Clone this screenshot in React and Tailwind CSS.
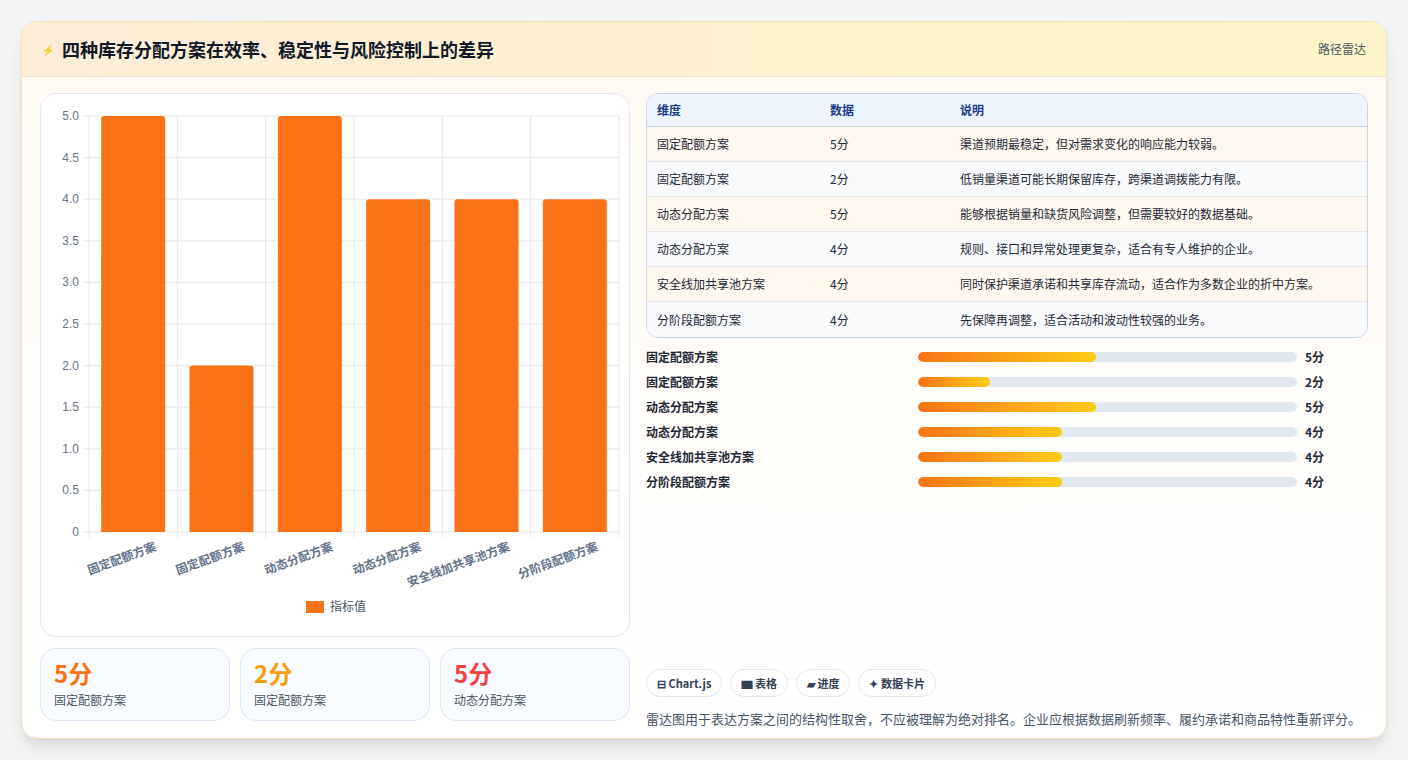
import React from "react";

const items = [
  ["固定配额方案", 5, "渠道预期最稳定，但对需求变化的响应能力较弱。"],
  ["固定配额方案", 2, "低销量渠道可能长期保留库存，跨渠道调拨能力有限。"],
  ["动态分配方案", 5, "能够根据销量和缺货风险调整，但需要较好的数据基础。"],
  ["动态分配方案", 4, "规则、接口和异常处理更复杂，适合有专人维护的企业。"],
  ["安全线加共享池方案", 4, "同时保护渠道承诺和共享库存流动，适合作为多数企业的折中方案。"],
  ["分阶段配额方案", 4, "先保障再调整，适合活动和波动性较强的业务。"],
];

function Chart() {
  const x0 = 48, x1 = 578, yTop = 22, yBot = 438;
  const h = yBot - yTop;
  const w = (x1 - x0) / 6;
  const ticks = [0, 0.5, 1, 1.5, 2, 2.5, 3, 3.5, 4, 4.5, 5];
  return (
    <svg width="590" height="543" viewBox="0 0 590 543" style={{ fontFamily: "'Liberation Sans','Noto Sans CJK SC',sans-serif" }}>
      {ticks.map((t) => {
        const y = yBot - (t / 5) * h;
        return (
          <g key={t}>
            <line x1={x0 - 6} x2={x1} y1={y} y2={y} stroke="#e5e7eb" />
            <text x={x0 - 10} y={y + 4} fontSize="12" fill="#6b7280" textAnchor="end">{t === 0 ? "0" : t.toFixed(1)}</text>
          </g>
        );
      })}
      {[0, 1, 2, 3, 4, 5, 6].map((i) => (
        <line key={i} x1={x0 + i * w} x2={x0 + i * w} y1={yTop} y2={yBot + 6} stroke="#e5e7eb" />
      ))}
      {items.map((it, i) => {
        const bh = (it[1] / 5) * h;
        const cx = x0 + i * w + w / 2;
        return (
          <g key={i}>
            <path d={`M${cx - 32} ${yBot} V${yBot - bh + 3} a3 3 0 0 1 3 -3 H${cx + 29} a3 3 0 0 1 3 3 V${yBot} Z`} fill="#f97316" />
            <text x={cx + 24} y={yBot + 18} fontSize="12" fill="#64748b" fontWeight="600" textAnchor="end" transform={`rotate(-20 ${cx + 24} ${yBot + 18})`}>{it[0]}</text>
          </g>
        );
      })}
      <rect x="265" y="507" width="18" height="12" fill="#f97316" />
      <text x="289" y="517" fontSize="12" fill="#4b5563">指标值</text>
    </svg>
  );
}

export default function App() {
  const pct = { 5: "47%", 2: "19%", 4: "38%" };
  return (
    <div className="w-[1408px] h-[760px] bg-[#f3f4f6] p-[21px] pb-0" style={{ fontFamily: "'Noto Sans CJK SC',sans-serif" }}>
      <div className="h-[718px] rounded-2xl border border-[#f5deb3] bg-gradient-to-b from-[#fffaf3] to-white overflow-hidden shadow-lg flex flex-col">
        <div className="h-[55px] shrink-0 flex items-center justify-between px-5 bg-gradient-to-r from-[#fdecd8] to-[#fdf5c9] border-b border-[#f1e4cf]">
          <div className="flex items-center gap-2">
            <span className="text-[10px] text-[#4f46e5]">⚡</span>
            <span className="text-[18px] font-bold text-[#111827]">四种库存分配方案在效率、稳定性与风险控制上的差异</span>
          </div>
          <span className="text-[12px] text-[#4b5563]">路径雷达</span>
        </div>
        <div className="flex gap-4 px-[18px] pt-[16px]">
          <div className="w-[590px] flex flex-col gap-[11px]">
            <div className="h-[544px] rounded-2xl border border-[#e5e7eb] bg-white overflow-hidden"><Chart /></div>
            <div className="grid grid-cols-3 gap-[10px]">
              {[["5分", "text-[#f97316]", "固定配额方案"], ["2分", "text-[#f59e0b]", "固定配额方案"], ["5分", "text-[#ef4444]", "动态分配方案"]].map((c, i) => (
                <div key={i} className="h-[73px] rounded-2xl border border-[#dbe7f5] bg-[#f8fbff] px-[13px] pt-[9px]">
                  <div className={`text-[24px] font-bold leading-[30px] ${c[1]}`}>{c[0]}</div>
                  <div className="text-[12px] text-[#4b5563] mt-[3px]">{c[2]}</div>
                </div>
              ))}
            </div>
          </div>
          <div className="flex-1 flex flex-col">
            <div className="rounded-xl border border-[#cbd5e1] overflow-hidden text-[12px] text-[#1f2937]">
              <div className="h-[33px] flex items-center bg-[#eef5ff] text-[#1e3a8a] font-bold border-b border-[#cbd5e1] px-[10px]">
                <div className="w-[173px]">维度</div><div className="w-[130px]">数据</div><div>说明</div>
              </div>
              {items.map((it, i) => (
                <div key={i} className={`h-[35px] flex items-center px-[10px] ${i % 2 ? "bg-[#f8fafc]" : "bg-[#fef8ee]"} ${i < 5 ? "border-b border-[#e5e7eb]" : ""}`}>
                  <div className="w-[173px]">{it[0]}</div><div className="w-[130px]">{it[1]}分</div><div>{it[2]}</div>
                </div>
              ))}
            </div>
            <div className="mt-[10px] flex flex-col gap-[7px]">
              {items.map((it, i) => (
                <div key={i} className="h-[18px] flex items-center text-[12px] font-semibold text-[#1f2937]">
                  <div className="w-[272px]">{it[0]}</div>
                  <div className="w-[379px] h-[10px] rounded-full bg-[#e2e8f0] overflow-hidden">
                    <div className="h-full rounded-full bg-gradient-to-r from-[#f97316] to-[#facc15]" style={{ width: pct[it[1]] }} />
                  </div>
                  <div className="ml-2 font-bold">{it[1]}分</div>
                </div>
              ))}
            </div>
            <div className="flex-1" />
            <div className="mt-[178px] flex gap-2 text-[11px] font-semibold text-[#334155]">
              {["⊟ Chart.js", "▆ 表格", "▰ 进度", "✦ 数据卡片"].map((t) => (
                <div key={t} className="h-[28px] px-[10px] rounded-full border border-[#e2e8f0] bg-white flex items-center">{t}</div>
              ))}
            </div>
            <div className="mt-[12px] text-[13px] text-[#475569]">雷达图用于表达方案之间的结构性取舍，不应被理解为绝对排名。企业应根据数据刷新频率、履约承诺和商品特性重新评分。</div>
          </div>
        </div>
      </div>
    </div>
  );
}
